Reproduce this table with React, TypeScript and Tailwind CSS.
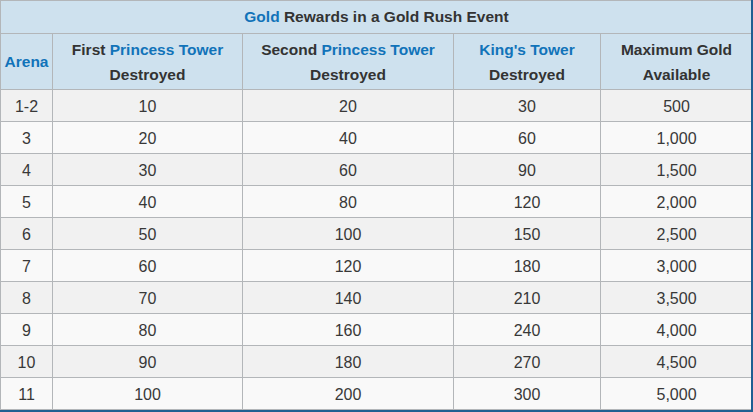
import React from "react";

const rows = [
  ["1-2", "10", "20", "30", "500"],
  ["3", "20", "40", "60", "1,000"],
  ["4", "30", "60", "90", "1,500"],
  ["5", "40", "80", "120", "2,000"],
  ["6", "50", "100", "150", "2,500"],
  ["7", "60", "120", "180", "3,000"],
  ["8", "70", "140", "210", "3,500"],
  ["9", "80", "160", "240", "4,000"],
  ["10", "90", "180", "270", "4,500"],
  ["11", "100", "200", "300", "5,000"],
];

export default function App() {
  return (
    <div className="w-[753px] h-[412px] overflow-hidden bg-white border-r-2 border-b-2 border-[#1f5f92] font-['Liberation_Sans',Arial,sans-serif] text-[#383838]">
      <table className="table-fixed border-collapse w-[752px] text-center">
        <colgroup>
          <col className="w-[52px]" />
          <col className="w-[190px]" />
          <col className="w-[211px]" />
          <col className="w-[147px]" />
          <col className="w-[152px]" />
        </colgroup>
        <thead className="bg-[#cee1ee] font-bold text-[15.5px] text-[#333]">
          <tr className="h-[33px]">
            <th colSpan={5} className="border border-[#b3b6b9]">
              <span className="text-[#1173b9]">Gold</span> Rewards in a Gold Rush Event
            </th>
          </tr>
          <tr className="h-[56px] leading-[25px]">
            <th className="border border-[#b3b6b9] text-[#1173b9]">Arena</th>
            <th className="border border-[#b3b6b9]">
              First <span className="text-[#1173b9]">Princess Tower</span>
              <br />
              Destroyed
            </th>
            <th className="border border-[#b3b6b9]">
              Second <span className="text-[#1173b9]">Princess Tower</span>
              <br />
              Destroyed
            </th>
            <th className="border border-[#b3b6b9]">
              <span className="text-[#1173b9]">King's Tower</span>
              <br />
              Destroyed
            </th>
            <th className="border border-[#b3b6b9]">
              Maximum Gold
              <br />
              Available
            </th>
          </tr>
        </thead>
        <tbody className="text-[16px]">
          {rows.map((r, i) => (
            <tr key={r[0]} className={i % 2 === 0 ? "h-[32px] bg-[#f1f1f1]" : "h-[32px] bg-[#f9f9f9]"}>
              {r.map((c, j) => (
                <td key={j} className="border border-[#b3b6b9] pt-[2px]">
                  {c}
                </td>
              ))}
            </tr>
          ))}
        </tbody>
      </table>
    </div>
  );
}
